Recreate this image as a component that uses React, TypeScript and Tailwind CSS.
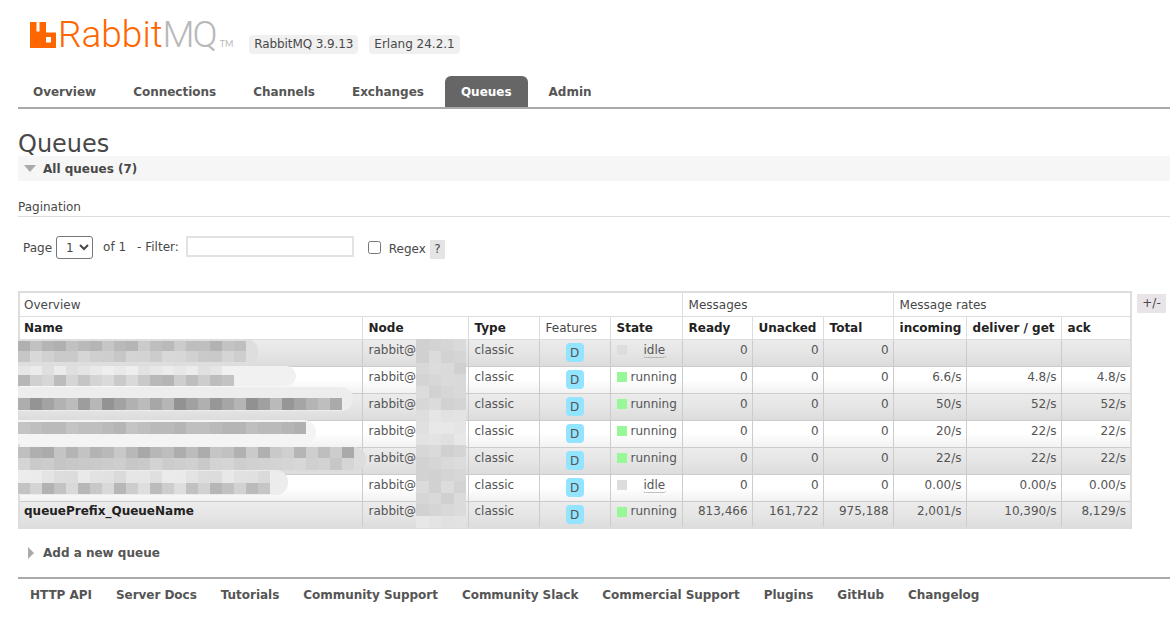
import React from 'react';

const font = { fontFamily: '"DejaVu Sans", Verdana, sans-serif' };

const tabs = ['Overview', 'Connections', 'Channels', 'Exchanges', 'Queues', 'Admin'];
const footerLinks = ['HTTP API', 'Server Docs', 'Tutorials', 'Community Support', 'Community Slack', 'Commercial Support', 'Plugins', 'GitHub', 'Changelog'];

const queues = [
  { name: '', state: 'idle', ready: '0', unacked: '0', total: '0', incoming: '', deliver: '', ack: '' },
  { name: '', state: 'running', ready: '0', unacked: '0', total: '0', incoming: '6.6/s', deliver: '4.8/s', ack: '4.8/s' },
  { name: '', state: 'running', ready: '0', unacked: '0', total: '0', incoming: '50/s', deliver: '52/s', ack: '52/s' },
  { name: '', state: 'running', ready: '0', unacked: '0', total: '0', incoming: '20/s', deliver: '22/s', ack: '22/s' },
  { name: '', state: 'running', ready: '0', unacked: '0', total: '0', incoming: '22/s', deliver: '22/s', ack: '22/s' },
  { name: '', state: 'idle', ready: '0', unacked: '0', total: '0', incoming: '0.00/s', deliver: '0.00/s', ack: '0.00/s' },
  { name: 'queuePrefix_QueueName', state: 'running', ready: '813,466', unacked: '161,722', total: '975,188', incoming: '2,001/s', deliver: '10,390/s', ack: '8,129/s' },
];

// blurred-out queue names: soft blob + two bands of mosaic cells
const blurs = [
  { top: 48, blobW: 240, blobTop: 0, blobH: 26, blob: '#dedede', bands: [[2, 10, 19, 176, 205], [12, 11, 19, 198, 216]] },
  { top: 75, blobW: 278, blobTop: 0, blobH: 20, blob: '#f1f1f1', bands: [[0, 9, 17, 222, 238], [9, 11, 18, 178, 218]] },
  { top: 102, blobW: 335, blobTop: -6, blobH: 24, blob: '#ededed', bands: [[5, 12, 27, 145, 190]] },
  { top: 129, blobW: 298, blobTop: 0, blobH: 24, blob: '#f4f4f4', bands: [[2, 12, 24, 150, 205]] },
  { top: 156, blobW: 348, blobTop: 0, blobH: 25, blob: '#dcdcdc', bands: [[0, 11, 28, 168, 208], [11, 12, 28, 196, 216]] },
  { top: 183, blobW: 270, blobTop: -4, blobH: 25, blob: '#ececec', bands: [[-3, 12, 21, 218, 236], [9, 11, 21, 178, 222]] },
];

const tone = (i: number, lo: number, hi: number) => {
  const v = lo + ((i * 37 + (i % 5) * 53 + (i % 3) * 17) % (hi - lo + 1));
  return 'rgb(' + v + ',' + v + ',' + v + ')';
};

function Mosaic() {
  return (
    <>
      {blurs.map((b, r) => (
        <div key={r} className="absolute left-0" style={{ top: b.top }}>
          <div className="absolute left-0 rounded-r-xl" style={{ top: b.blobTop, width: b.blobW, height: b.blobH, background: b.blob }} />
          {b.bands.map(([y, h, n, lo, hi], k) => (
            <div key={k} className="absolute left-0 flex" style={{ top: y, height: h }}>
              {Array.from({ length: n }).map((_, i) => (
                <div key={i} className="w-3 h-full" style={{ background: tone(i + r * 7 + k * 11, lo, hi) }} />
              ))}
            </div>
          ))}
        </div>
      ))}
      {/* blurred part of the node names */}
      <div className="absolute left-[398px] top-[48px] w-[50px] h-[189px] flex flex-col">
        {Array.from({ length: 16 }).map((_, i) => (
          <div key={i} className="flex h-3">
            {Array.from({ length: 4 }).map((_, j) => (
              <div key={j} className="w-[12.5px]" style={{ background: tone(i * 4 + j, i % 9 > 5 ? 222 : 208, i % 9 > 5 ? 232 : 220) }} />
            ))}
          </div>
        ))}
      </div>
    </>
  );
}

function Logo() {
  return (
    <div className="flex items-end h-[30px]">
      <svg viewBox="0 0 26 26" className="w-[26px] h-[26px] mb-[2px]">
        <path fill="#ff6600" fillRule="evenodd" d="M0 0h6.5v9.500h3V0H16v10.500h10V26H0V0zM16 15v5.500h5V15h-5z" />
      </svg>
      <span className="ml-[2px] -mb-[3px] text-[37px] leading-[37px] font-light text-[#ff6600]" style={{ fontFamily: 'Roboto, sans-serif' }}>Rabbit</span>
      <span className="-mb-[3px] text-[37px] leading-[37px] tracking-[-2px] font-light text-[#b8b8b8]" style={{ fontFamily: 'Roboto, sans-serif' }}>MQ</span>
      <span className="ml-[4px] mb-0 text-[9px] leading-[12px] text-[#b8b8b8]" style={{ fontFamily: 'Lato, sans-serif' }}>TM</span>
    </div>
  );
}

function StateCell({ state }: { state: string }) {
  if (state === 'idle') {
    return (
      <div className="flex items-center">
        <span className="w-[10px] h-[10px] bg-[#dddddd] mt-px" />
        <span className="ml-[16px] mt-px leading-[14px] px-px border-b border-dotted border-[#888] rounded-b-[3px]">idle</span>
      </div>
    );
  }
  return (
    <div className="flex items-center">
      <span className="w-[10px] h-[10px] bg-[#98f898] mt-px" />
      <span className="ml-[4px]">running</span>
    </div>
  );
}

export default function App() {
  const group = 'border border-[#dddddd] pl-[6px] pt-[1px] text-left font-normal text-[#484848]';
  const th = 'border border-[#dddddd] bg-white pl-[6px] text-left font-bold text-[#222] align-middle';
  const td = 'border border-[#cccccc] pl-[6px] pr-[4px] pb-[6px] text-[#555] align-middle';
  const num = td + ' text-right';

  return (
    <div className="w-[1170px] h-[631px] overflow-hidden bg-white text-xs text-[#484848]" style={font}>
      {/* logo and versions */}
      <header className="flex items-start h-[76px] pl-[30px] pt-[20px]">
        <Logo />
        <div className="flex gap-[11px] ml-[16px] mt-[15px]">
          <span className="bg-[#f0f0f0] rounded px-[5px] leading-[19px] tracking-[-0.1px]">RabbitMQ 3.9.13</span>
          <span className="bg-[#f0f0f0] rounded px-[5px] leading-[19px]">Erlang 24.2.1</span>
        </div>
      </header>

      <nav className="ml-[18px] h-[33px] border-b-2 border-[#aaaaaa] flex gap-[5px] tracking-[-0.015px]">
        {tabs.map((tab) => (
          <a key={tab} className={tab === 'Queues'
            ? 'h-[31px] px-4 rounded-t-md bg-[#666666] text-white font-bold leading-[32px]'
            : 'h-[31px] px-4 first:pl-[15px] text-[#555555] font-bold leading-[32px]'}>
            {tab}
          </a>
        ))}
      </nav>

      <main className="pl-[18px]">
        <h1 className="mt-[21px] text-2xl leading-[28px] font-normal text-[#484848]">Queues</h1>
        <div className="h-[25px] -mt-[2px] bg-[#f6f6f6] flex items-center">
          <span className="ml-[6px] w-0 h-0 border-x-[6px] border-x-transparent border-t-[7px] border-t-[#aaaaaa]" />
          <span className="ml-[7px] font-bold text-[#484848]">All queues (7)</span>
        </div>

        <div className="mt-[18px] h-[18px] border-b border-[#dddddd] leading-[16px]">Pagination</div>

        <div className="mt-[19px] h-[23px] flex items-center pl-[5px]">
          <label>Page</label>
          <select className="ml-1 w-[37px] h-[23px] border border-[#767676] rounded-[3px] bg-white text-xs pl-[5px]" defaultValue="1">
            <option>1</option>
          </select>
          <span className="ml-[10px] -mt-[1px]">of 1</span>
          <span className="ml-[11px] -mt-[1px]">- Filter:</span>
          <input className="ml-[7px] w-[168px] h-[21px] -mt-[2px] border-2 border-[#e2e2e2] bg-white" />
          <input type="checkbox" className="ml-[14px] w-[13px] h-[13px] -mt-[1px]" />
          <span className="ml-2 mt-[3px]">Regex</span>
          <span className="ml-[4px] mt-[3px] w-[15px] h-[19px] bg-[#e4e4e4] text-center leading-[19px]">?</span>
        </div>

        <div className="mt-[32px] flex items-start">
          <div className="relative w-[1112px]">
            <table className="w-[1112px] table-fixed border-collapse border-2 border-[#dddddd]">
              <colgroup>
                <col className="w-[343px]" />
                <col className="w-[106px]" />
                <col className="w-[71px]" />
                <col className="w-[71px]" />
                <col className="w-[72px]" />
                <col className="w-[70px]" />
                <col className="w-[71px]" />
                <col className="w-[70px]" />
                <col className="w-[73px]" />
                <col className="w-[95px]" />
                <col className="w-[70px]" />
              </colgroup>
              <thead>
                <tr className="h-[24px]">
                  <th colSpan={5} className={group + ' !pl-[4px]'}>Overview</th>
                  <th colSpan={3} className={group}>Messages</th>
                  <th colSpan={3} className={group}>Message rates</th>
                </tr>
                <tr className="h-[23px]">
                  <th className={th + ' !pl-[4px]'}>Name</th>
                  <th className={th}>Node</th>
                  <th className={th}>Type</th>
                  <th className="border border-[#dddddd] bg-white pl-[6px] text-left font-normal text-[#484848]">Features</th>
                  <th className={th}>State</th>
                  <th className={th}>Ready</th>
                  <th className={th}>Unacked</th>
                  <th className={th}>Total</th>
                  <th className={th}>incoming</th>
                  <th className={th}>deliver / get</th>
                  <th className={th}>ack</th>
                </tr>
              </thead>
              <tbody>
                {queues.map((q, i) => (
                  <tr key={i} className={i % 2 === 0
                    ? 'h-[27px] bg-gradient-to-b from-[#ececec] via-[#e6e6e6] to-[#dcdcdc]'
                    : 'h-[27px] bg-gradient-to-b from-white via-white to-[#f2f2f2]'}>
                    <td className={td + ' !pl-[4px] font-bold !text-[#222]'}>{q.name}</td>
                    <td className={td}>rabbit@</td>
                    <td className={td}>classic</td>
                    <td className="border border-[#cccccc] text-center align-middle">
                      <span className="inline-block w-[18px] h-[19px] rounded bg-[#92e4ff] text-[#555] leading-[20px]">D</span>
                    </td>
                    <td className={td}><StateCell state={q.state} /></td>
                    <td className={num}>{q.ready}</td>
                    <td className={num}>{q.unacked}</td>
                    <td className={num}>{q.total}</td>
                    <td className={num}>{q.incoming}</td>
                    <td className={num}>{q.deliver}</td>
                    <td className={num}>{q.ack}</td>
                  </tr>
                ))}
              </tbody>
            </table>
            <Mosaic />
          </div>
          <span className="ml-[7px] mt-[3px] w-[29px] h-[19px] bg-[#e8e4e8] text-center leading-[19px]">+/-</span>
        </div>

        <div className="mt-[16px] h-[16px] flex items-center pl-[10px]">
          <span className="w-0 h-0 border-y-[6px] border-y-transparent border-l-[6px] border-l-[#aaaaaa]" />
          <span className="ml-[9px] font-bold text-[#555555]">Add a new queue</span>
        </div>
      </main>

      <footer className="ml-[18px] mt-[16px] border-t-2 border-[#aaaaaa] pl-3 pt-[8px] flex gap-6 font-bold text-[#555555] leading-[16px] tracking-[-0.035px]">
        {footerLinks.map((link) => (
          <a key={link}>{link}</a>
        ))}
      </footer>
    </div>
  );
}
